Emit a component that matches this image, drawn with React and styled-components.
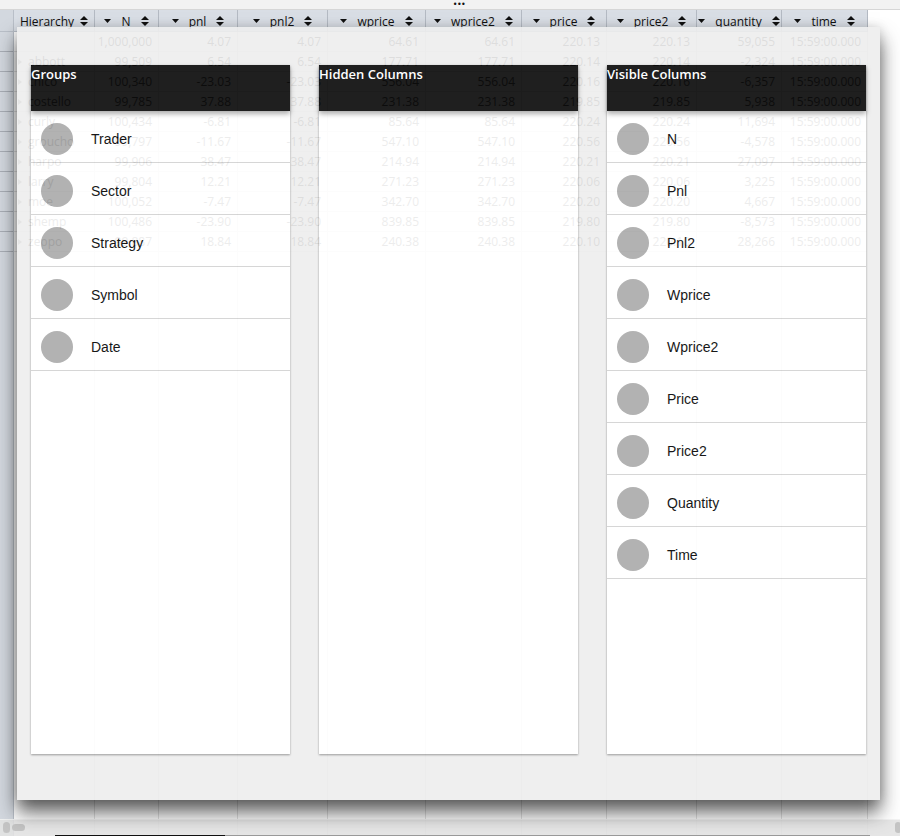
import React from "react";
import styled, { createGlobalStyle } from "styled-components";

const GlobalStyle = createGlobalStyle`
  html, body {
    margin: 0;
    padding: 0;
    background: #ffffff;
    overflow: hidden;
  }
  body {
    font-family: "Open Sans", "DejaVu Sans", sans-serif;
  }
`;

const TIME = "15:59:00.000";

const COLUMNS = [
  { name: "Hierarchy", width: 81 },
  { name: "N", width: 64 },
  { name: "pnl", width: 79 },
  { name: "pnl2", width: 90 },
  { name: "wprice", width: 98 },
  { name: "wprice2", width: 96 },
  { name: "price", width: 85 },
  { name: "price2", width: 90 },
  { name: "quantity", width: 85 },
  { name: "time", width: 86 },
];

const row = (name, n, pnl, wprice, price, qty) => [
  name, n, pnl, pnl, wprice, wprice, price, price, qty, TIME,
];

const ROWS = [
  row("", "1,000,000", "4.07", "64.61", "220.13", "59,055"),
  row("abbott", "99,509", "6.54", "177.71", "220.14", "-2,324"),
  row("chico", "100,340", "-23.03", "556.04", "220.16", "-6,357"),
  row("costello", "99,785", "37.88", "231.38", "219.85", "5,938"),
  row("curly", "100,434", "-6.81", "85.64", "220.24", "11,694"),
  row("groucho", "99,797", "-11.67", "547.10", "220.56", "-4,578"),
  row("harpo", "99,906", "38.47", "214.94", "220.21", "27,097"),
  row("larry", "99,804", "12.21", "271.23", "220.06", "3,225"),
  row("moe", "100,052", "-7.47", "342.70", "220.20", "4,667"),
  row("shemp", "100,486", "-23.90", "839.85", "219.80", "-8,573"),
  row("zeppo", "99,887", "18.84", "240.38", "220.10", "28,266"),
];

const GROUPS = ["Trader", "Sector", "Strategy", "Symbol", "Date"];
const VISIBLE = ["N", "Pnl", "Pnl2", "Wprice", "Wprice2", "Price", "Price2", "Quantity", "Time"];

const SortIcon = () => (
  <svg width="8" height="10" viewBox="0 0 8 10">
    <polygon points="0,4 4,0 8,4" fill="#111" />
    <polygon points="0,6 4,10 8,6" fill="#111" />
  </svg>
);

const DropIcon = () => (
  <svg width="7" height="4" viewBox="0 0 7 4">
    <polygon points="0,0 7,0 3.5,4" fill="#111" />
  </svg>
);

const Page = styled.div`
  position: relative;
  width: 900px;
  height: 836px;
  display: flex;
  flex-direction: column;
  overflow: hidden;
  background: #ffffff;
`;

const TopBar = styled.div`
  height: 9px;
  flex: none;
  background: #f2f2f2;
  border-bottom: 1px solid #d6d6d6;
  display: flex;
  justify-content: center;
  align-items: center;
  padding-left: 18px;
`;

const Dots = styled.span`
  font-family: "DejaVu Sans", sans-serif;
  font-size: 8px;
  line-height: 9px;
  letter-spacing: -0.5px;
  color: #111;
`;

const Grid = styled.div`
  flex: 1;
  display: flex;
  min-height: 0;
`;

const Gutter = styled.div`
  width: 14px;
  flex: none;
  background: #d3d8df;
  border-right: 1px solid #b9bfc8;
  box-sizing: border-box;
`;

const GutterHead = styled.div`
  height: 22px;
  box-sizing: border-box;
  border-bottom: 1px solid #b9bfc8;
`;

const GutterCell = styled.div`
  height: 20px;
  box-sizing: border-box;
  border-bottom: 1px solid #a9aeb6;
`;

const Column = styled.div`
  width: ${(p) => p.$width}px;
  flex: none;
  display: flex;
  flex-direction: column;
  border-right: 1px solid #e2e2e2;
  box-sizing: border-box;
`;

const HeadCell = styled.div`
  height: 22px;
  flex: none;
  box-sizing: border-box;
  background: #d9dee5;
  border-bottom: 1px solid #b9bfc8;
  box-shadow: 1px 0 0 #b4bac3;
  display: flex;
  align-items: center;
  justify-content: center;
  gap: ${(p) => (p.$first ? 6 : 10)}px;
  font-size: 12px;
  color: #111;
  white-space: nowrap;
  padding-top: 1px;
`;

const Cell = styled.div`
  height: 20px;
  flex: none;
  box-sizing: border-box;
  border-bottom: 1px solid #e4e4e4;
  font-size: 12px;
  line-height: 19px;
  color: #444444;
  white-space: nowrap;
  overflow: hidden;
  text-align: ${(p) => (p.$tree ? "left" : "right")};
  padding: ${(p) => (p.$tree ? "0 0 0 4px" : "0 6px 0 0")};
`;

const TreeArrow = styled.span`
  display: inline-block;
  width: 0;
  height: 0;
  border-top: 3px solid transparent;
  border-bottom: 3px solid transparent;
  border-left: 4px solid #8a8a8a;
  margin-right: 6px;
  vertical-align: 1px;
`;

const Filler = styled.div`
  flex: 1;
  background: #ffffff;
`;

const ScrollBar = styled.div`
  position: absolute;
  left: 0;
  right: 0;
  bottom: 0;
  height: 16px;
  background: rgba(226, 226, 226, 0.88);
  border-top: 1px solid rgba(255, 255, 255, 0.5);
`;

const Thumb = styled.div`
  position: absolute;
  top: ${(p) => p.$top}px;
  left: ${(p) => p.$left}px;
  width: ${(p) => p.$w}px;
  height: ${(p) => p.$h}px;
  border-radius: 4px;
  background: #c4c4c4;
`;

const Track = styled.div`
  position: absolute;
  bottom: 0;
  left: 55px;
  width: 815px;
  height: 1px;
  background: #9a9a9a;

  &::before {
    content: "";
    position: absolute;
    left: 0;
    top: 0;
    width: 170px;
    height: 1px;
    background: #111;
  }
`;

const Dialog = styled.div`
  position: absolute;
  left: 17px;
  top: 27px;
  width: 863px;
  height: 773px;
  box-sizing: border-box;
  padding: 38px 14px 46px;
  background: #eeeeee;
  opacity: 0.9;
  box-shadow: 0 12px 18px rgba(0, 0, 0, 0.7), 0 0 10px rgba(0, 0, 0, 0.14);
  display: flex;
  gap: 29px;
`;

const Panel = styled.div`
  flex: 1;
  display: flex;
  flex-direction: column;
  background: #ffffff;
  box-shadow: 0 1px 2px rgba(0, 0, 0, 0.4);
`;

const PanelTitle = styled.div`
  height: 46px;
  flex: none;
  background: #070707;
  color: #ffffff;
  font-family: "Open Sans", "DejaVu Sans", sans-serif;
  font-weight: 600;
  font-size: 13px;
  line-height: 18px;
  box-shadow: 0 3px 5px rgba(0, 0, 0, 0.35);
  position: relative;
`;

const Item = styled.div`
  height: 52px;
  flex: none;
  box-sizing: border-box;
  padding: 5px 10px 0;
  border-bottom: 1px solid #d2d2d2;
  display: flex;
  align-items: center;
  gap: 18px;
`;

const Dot = styled.div`
  width: 32px;
  height: 32px;
  border-radius: 50%;
  background: #aaaaaa;
  flex: none;
`;

const Label = styled.span`
  font-family: "Liberation Sans", Arial, sans-serif;
  font-size: 14px;
  color: #000000;
`;

const ListPanel = ({ title, items }) => (
  <Panel>
    <PanelTitle>{title}</PanelTitle>
    {items.map((it) => (
      <Item key={it}>
        <Dot />
        <Label>{it}</Label>
      </Item>
    ))}
  </Panel>
);

export default function App() {
  return (
    <Page>
      <GlobalStyle />
      <TopBar>
        <Dots>•••</Dots>
      </TopBar>
      <Grid>
        <Gutter>
          <GutterHead />
          {ROWS.map((_, i) => (
            <GutterCell key={i} />
          ))}
        </Gutter>
        {COLUMNS.map((col, ci) => (
          <Column key={col.name} $width={col.width}>
            <HeadCell $first={ci === 0}>
              {ci > 0 && <DropIcon />}
              <span>{col.name}</span>
              <SortIcon />
            </HeadCell>
            {ROWS.map((r, ri) => (
              <Cell key={ri} $tree={ci === 0}>
                {ci === 0 && r[0] && <TreeArrow />}
                {r[ci]}
              </Cell>
            ))}
          </Column>
        ))}
        <Filler />
      </Grid>
      <ScrollBar>
        <Thumb $top={2} $left={3} $w={7} $h={11} />
        <Thumb $top={4} $left={12} $w={13} $h={7} />
        <Thumb $top={2} $left={895} $w={6} $h={11} />
        <Track />
      </ScrollBar>
      <Dialog>
        <ListPanel title="Groups" items={GROUPS} />
        <ListPanel title="Hidden Columns" items={[]} />
        <ListPanel title="Visible Columns" items={VISIBLE} />
      </Dialog>
    </Page>
  );
}
